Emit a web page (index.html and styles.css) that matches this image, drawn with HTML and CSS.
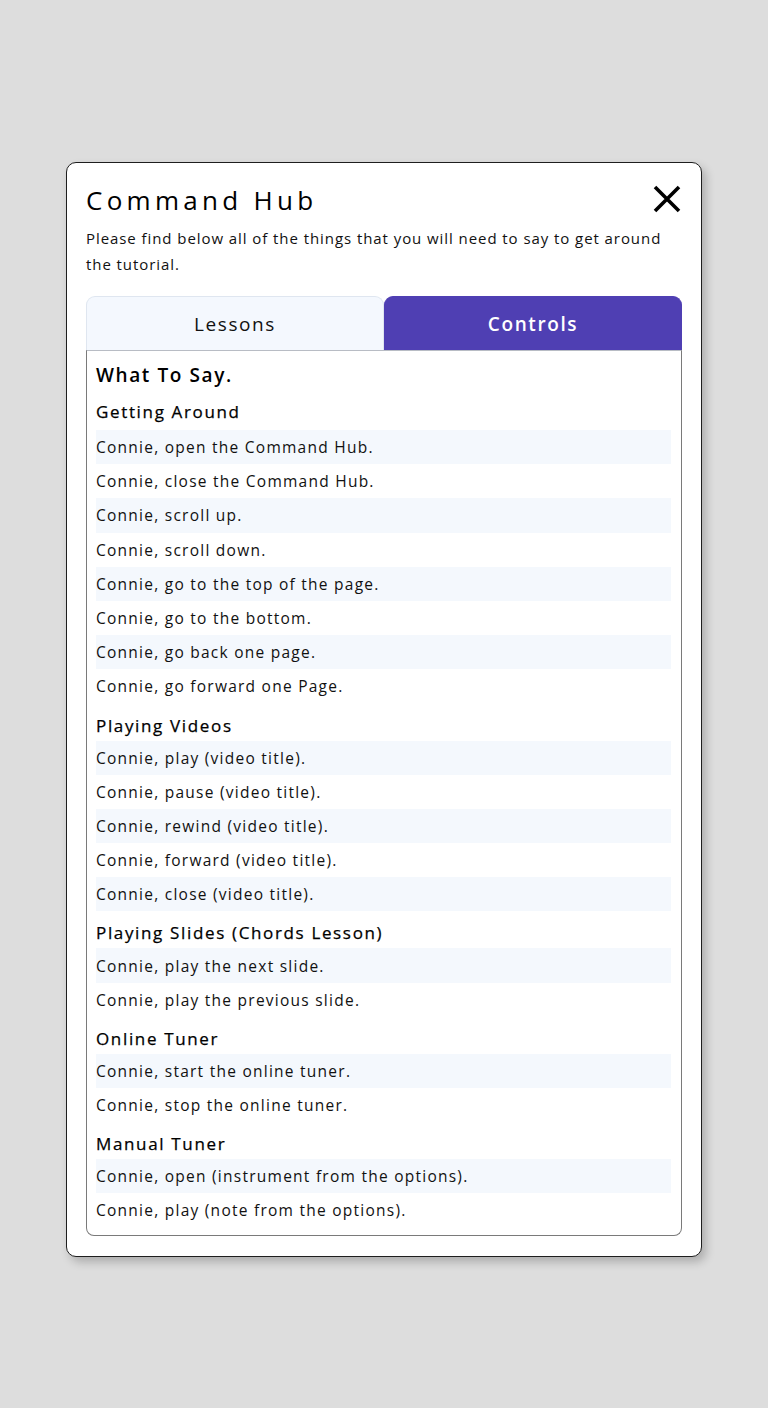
FILE: index.html
```html
<!DOCTYPE html>
<html lang="en">
<head>
<meta charset="utf-8">
<title>Command Hub</title>
<link rel="stylesheet" href="styles.css">
</head>
<body>
<div class="page">
  <div class="card">
    <div class="card-head">
      <h1 class="title">Command Hub</h1>
      <button class="close" aria-label="Close">
        <svg width="28" height="28" viewBox="0 0 28 28"><path d="M2 2 L26 26 M26 2 L2 26" stroke="#000" stroke-width="3.6" fill="none"/></svg>
      </button>
    </div>
    <p class="desc">Please find below all of the things that you will need to say to get around the tutorial.</p>
    <div class="tabs">
      <div class="tab">Lessons</div>
      <div class="tab active">Controls</div>
    </div>
    <div class="panel">
      <h2 class="panel-title">What To Say.</h2>
      <h3 class="section">Getting Around</h3>
      <ul class="rows">
        <li>Connie, open the Command Hub.</li>
        <li>Connie, close the Command Hub.</li>
        <li>Connie, scroll up.</li>
        <li>Connie, scroll down.</li>
        <li>Connie, go to the top of the page.</li>
        <li>Connie, go to the bottom.</li>
        <li>Connie, go back one page.</li>
        <li>Connie, go forward one Page.</li>
      </ul>
      <h3 class="section">Playing Videos</h3>
      <ul class="rows">
        <li>Connie, play (video title).</li>
        <li>Connie, pause (video title).</li>
        <li>Connie, rewind (video title).</li>
        <li>Connie, forward (video title).</li>
        <li>Connie, close (video title).</li>
      </ul>
      <h3 class="section">Playing Slides (Chords Lesson)</h3>
      <ul class="rows">
        <li>Connie, play the next slide.</li>
        <li>Connie, play the previous slide.</li>
      </ul>
      <h3 class="section">Online Tuner</h3>
      <ul class="rows">
        <li>Connie, start the online tuner.</li>
        <li>Connie, stop the online tuner.</li>
      </ul>
      <h3 class="section">Manual Tuner</h3>
      <ul class="rows">
        <li>Connie, open (instrument from the options).</li>
        <li>Connie, play (note from the options).</li>
      </ul>
    </div>
  </div>
</div>
</body>
</html>
```

FILE: styles.css
```css
* { box-sizing: border-box; }
html, body { margin: 0; padding: 0; }
body {
  background: #dddddd;
  font-family: "Open Sans", "DejaVu Sans", sans-serif;
  color: #111;
}
.page {
  padding: 162px 66px 0 66px;
  min-height: 1408px;
}
.card {
  background: #fff;
  border: 1px solid #1e1e1e;
  border-radius: 10px;
  box-shadow: 4px 5px 10px rgba(0,0,0,0.22);
  padding: 19px 19px 20px 19px;
}
.card-head {
  display: flex;
  align-items: center;
  justify-content: space-between;
  height: 36px;
}
.title {
  margin: 0;
  font-size: 26px;
  font-weight: 400;
  letter-spacing: 4.3px;
  line-height: 36px;
  color: #000;
}
.close {
  border: 0;
  background: none;
  padding: 0;
  margin: -3px 1px 0 0;
  width: 28px;
  height: 28px;
  display: block;
}
.close svg { display: block; }
.desc {
  margin: 7px 0 0 0;
  font-size: 15px;
  line-height: 26px;
  letter-spacing: 0.93px;
  color: #111;
}
.tabs {
  margin-top: 19px;
  display: grid;
  grid-template-columns: 1fr 1fr;
  height: 54px;
}
.tab {
  display: flex;
  align-items: center;
  justify-content: center;
  font-size: 19px;
  letter-spacing: 1.6px;
  border-radius: 9px 9px 0 0;
  background: #f4f8fe;
  border: 1px solid #dfe6f0;
  border-bottom: 0;
  color: #111;
}
.tab.active {
  background: #4f3fb3;
  border-color: #4f3fb3;
  color: #fff;
  font-weight: 600;
  letter-spacing: 1.6px;
}
.panel {
  border: 1px solid #7a7a7a;
  border-top-color: #b8bcc4;
  border-radius: 0 0 8px 8px;
  padding: 12px 10px 7px 9px;
}
.panel-title {
  margin: 0;
  font-size: 19px;
  font-weight: 600;
  line-height: 24px;
  letter-spacing: 1.6px;
  color: #000;
}
.section {
  margin: 10px 0 3px 0;
  font-size: 17px;
  font-weight: 500;
  line-height: 24px;
  letter-spacing: 1.65px;
  color: #000;
  -webkit-text-stroke: 0.25px #000;
}
.panel-title + .section { margin-top: 13px; margin-bottom: 6px; }
.rows {
  list-style: none;
  margin: 0;
  padding: 0;
}
.rows li {
  height: 34.2px;
  display: flex;
  align-items: center;
  font-size: 15.5px;
  letter-spacing: 1.25px;
  color: #111;
}
.rows li:nth-child(odd) { background: #f4f8fd; }
```
